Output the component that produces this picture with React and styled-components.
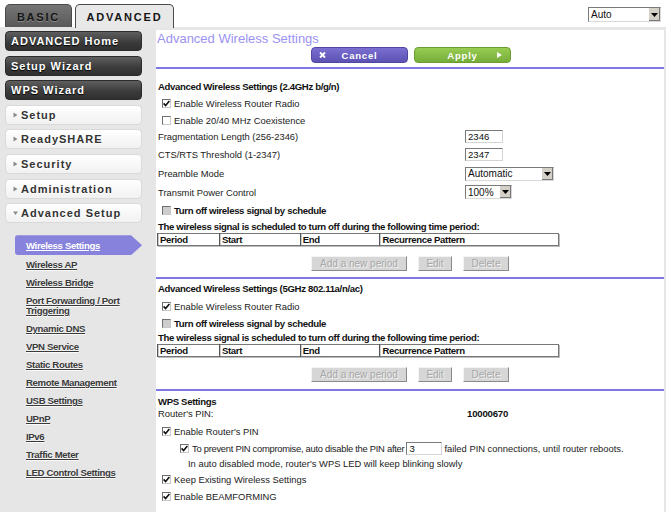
import React from 'react';
import styled, { createGlobalStyle } from 'styled-components';

const Global = createGlobalStyle`
  html, body { margin: 0; padding: 0; background: #fff; }
  body { font-family: "Liberation Sans", Arial, sans-serif; }
  * { box-sizing: border-box; }
`;

const Page = styled.div`
  width: 666px;
  height: 512px;
  overflow: hidden;
  display: flex;
  flex-direction: column;
  background: #e6e6e6;
`;

const TopBar = styled.div`
  height: 27px;
  flex: none;
  background: #fff;
  display: flex;
  align-items: flex-end;
  padding: 0 5px;
`;

const Tab = styled.div`
  height: ${p => (p.$active ? 24 : 23)}px;
  width: ${p => p.$w}px;
  margin-right: 3px;
  border: 1px solid #4a4a4a;
  border-bottom: none;
  border-radius: 5px 5px 0 0;
  background: ${p => (p.$active ? '#e8e8e8' : 'linear-gradient(#767676, #585858)')};
  color: #151515;
  text-shadow: ${p => (p.$active ? 'none' : '0 1px 0 #8a8a8a')};
  font-weight: bold;
  font-size: 11px;
  letter-spacing: 1.8px;
  display: flex;
  align-items: center;
  justify-content: center;
  padding-top: 1px;
  margin-bottom: ${p => (p.$active ? -1 : 0)}px;
  position: relative;
`;

const TopSpacer = styled.div`
  flex: 1;
`;

const FakeSelect = styled.div`
  width: ${p => p.$w}px;
  height: ${p => p.$h || 13}px;
  border: 1px solid;
  border-color: #7a7a7a #d8d8d8 #d8d8d8 #7a7a7a;
  background: #fff;
  display: flex;
  align-items: center;
  font-size: ${p => p.$fs || 10}px;
  color: #111;
  padding-left: 2px;
  align-self: ${p => (p.$top ? 'flex-start' : 'auto')};
  margin-top: ${p => (p.$top ? 7 : 0)}px;
`;

const SelectText = styled.span`
  flex: 1;
  white-space: nowrap;
`;

const SelectArrow = styled.span`
  width: 12px;
  height: 100%;
  background: #d4d0c8;
  border-left: 1px solid #fff;
  box-shadow: inset -1px -1px 0 #777;
  display: flex;
  align-items: center;
  justify-content: center;
`;

const Main = styled.div`
  flex: 1;
  display: flex;
  min-height: 0;
`;

const Sidebar = styled.nav`
  width: 156px;
  flex: none;
  padding: 4px 0 0 5px;
  display: flex;
  flex-direction: column;
`;

const MenuStack = styled.div`
  display: flex;
  flex-direction: column;
  gap: 4.6px;
  width: 137px;
`;

const MenuButton = styled.div`
  height: 20px;
  border-radius: 4px;
  display: flex;
  align-items: center;
  font-weight: bold;
  font-size: 11px;
  letter-spacing: 1px;
  white-space: nowrap;
  padding-left: ${p => (p.$dark ? 5 : 7)}px;
  gap: 3px;
  ${p =>
    p.$dark
      ? `
    background: linear-gradient(#5e5e5e, #3a3a3a 60%, #303030);
    border: 1px solid #2c2c2c;
    color: #fff;
    text-shadow: 0 1px 1px #000;
  `
      : `
    background: linear-gradient(#ffffff, #f1f1f1);
    border: 1px solid #dadada;
    color: #333;
    text-shadow: 0 1px 0 #fff;
  `}
`;

const SubList = styled.div`
  margin-top: 12px;
  display: flex;
  flex-direction: column;
  gap: 8px;
`;

const ActiveLink = styled.div`
  width: 127px;
  height: 20px;
  margin-left: 10px;
  margin-bottom: -3px;
  padding-left: 11px;
  display: flex;
  align-items: center;
  background: #8782dc;
  border-radius: 3px 0 0 3px;
  clip-path: polygon(0 0, 116px 0, 127px 50%, 116px 100%, 0 100%);
  color: #fff;
  font-weight: bold;
  font-size: 9.6px;
  letter-spacing: -0.35px;
  text-decoration: underline;
`;

const SubLink = styled.a`
  display: block;
  margin-left: 21px;
  width: 100px;
  line-height: 10px;
  font-weight: bold;
  font-size: 9.6px;
  letter-spacing: -0.35px;
  color: #3a3a3a;
  text-decoration: underline;
  text-shadow: 0 1px 0 #fafafa;
`;

const Content = styled.main`
  flex: 1;
  margin: 3px 2px 0 0;
  background: #fff;
  display: flex;
  flex-direction: column;
  font-size: 9.4px;
  color: #222;
`;

const Title = styled.div`
  height: 17px;
  line-height: 17px;
  padding-left: 1px;
  font-size: 13px;
  color: #9c92f2;
`;

const ActionBar = styled.div`
  display: flex;
  gap: 6px;
  margin-left: 155px;
`;

const ActionButton = styled.div`
  width: 97px;
  height: 16px;
  border-radius: 4px;
  display: flex;
  align-items: center;
  justify-content: center;
  position: relative;
  color: #fff;
  font-weight: bold;
  font-size: 9.5px;
  letter-spacing: 0.8px;
  background: ${p =>
    p.$green ? 'linear-gradient(#98cc52, #76ad3a)' : 'linear-gradient(#7b70d2, #5c52b2)'};
  border: 1px solid ${p => (p.$green ? '#6a9e33' : '#5047a3')};
`;

const ButtonIcon = styled.span`
  position: absolute;
  top: 50%;
  transform: translateY(-50%);
  ${p => (p.$right ? 'right: 8px;' : 'left: 7px;')}
  display: flex;
`;

const Divider = styled.div`
  height: 2px;
  flex: none;
  margin-top: ${p => p.$mt}px;
  background: #7e77e4;
`;

const Heading = styled.div`
  height: ${p => p.$h}px;
  margin-top: ${p => p.$mt || 0}px;
  padding-left: 2px;
  display: flex;
  align-items: center;
  font-weight: bold;
  font-size: 9.6px;
  letter-spacing: -0.35px;
  color: #111;
`;

const Row = styled.div`
  height: ${p => p.$h}px;
  margin-top: ${p => p.$mt || 0}px;
  padding-left: ${p => p.$indent ?? 6}px;
  display: flex;
  align-items: center;
  white-space: nowrap;
`;

const FieldRow = styled.div`
  height: ${p => p.$h}px;
  display: grid;
  grid-template-columns: 307px auto;
  align-items: center;
  padding-left: 2px;
  white-space: nowrap;
`;

const Value = styled.span`
  padding-left: 2px;
  font-weight: bold;
  font-size: 9.6px;
  letter-spacing: -0.2px;
  color: #111;
`;

const Box = styled.span`
  width: 9px;
  height: 9px;
  flex: none;
  margin-right: 3px;
  border: 1px solid;
  border-color: #6f6f6f #c8c8c8 #c8c8c8 #6f6f6f;
  background: ${p => (p.$disabled ? '#cdcdcd' : '#fff')};
  display: flex;
  align-items: center;
  justify-content: center;
`;

const Bold = styled.span`
  font-weight: bold;
  font-size: 9.6px;
  letter-spacing: -0.35px;
  color: #111;
`;

const Tight = styled.span`
  letter-spacing: -0.27px;
`;

const TextInput = styled.div`
  width: ${p => p.$w || 38}px;
  height: 13px;
  margin: ${p => p.$m || 0};
  border: 1px solid;
  border-color: #7a7a7a #d4d4d4 #d4d4d4 #7a7a7a;
  background: #fff;
  padding-left: 2px;
  display: flex;
  align-items: center;
  font-size: 9.6px;
  color: #111;
`;

const Sched = styled.table`
  margin: 1px 0 0 1px;
  width: 402px;
  height: 13px;
  border-collapse: collapse;
  border: 1px solid #777;
  box-shadow: 1px 1px 0 #bbb;
  td {
    padding: 0 0 0 2px;
    height: 11px;
    border-left: 1px solid #555;
    box-shadow: inset 1px 0 0 #ccc;
    font-weight: bold;
    font-size: 9.6px;
    letter-spacing: -0.35px;
    color: #111;
    line-height: 11px;
  }
`;

const Cell = styled.td`
  width: ${p => p.$w}px;
`;

const ButtonRow = styled.div`
  display: flex;
  gap: 11px;
  margin: 10px 0 0 155px;
`;

const GreyButton = styled.div`
  width: ${p => p.$w}px;
  height: 15px;
  background: #d6d6d6;
  border: 1px solid;
  border-color: #f4f4f4 #8a8a8a #8a8a8a #f4f4f4;
  color: #a6a6a6;
  text-shadow: 1px 1px 0 #f2f2f2;
  font-size: 10px;
  display: flex;
  align-items: center;
  justify-content: center;
`;

const Para = styled.span`
  display: inline-flex;
  align-items: center;
`;

const Check = ({ on, disabled }) => (
  <Box $disabled={disabled}>
    {on && (
      <svg width="7" height="7" viewBox="0 0 7 7">
        <path d="M0.6 3.4 L2.6 5.5 L6.4 1" fill="none" stroke="#111" strokeWidth="1.6" />
      </svg>
    )}
  </Box>
);

const Caret = ({ down, color = '#8a8a8a' }) => (
  <svg width="5" height="6" viewBox="0 0 5 6">
    {down ? (
      <polygon points="0,1.5 5,1.5 2.5,5" fill={color} />
    ) : (
      <polygon points="0.5,0.5 4.5,3 0.5,5.5" fill={color} />
    )}
  </svg>
);

const DropArrow = () => (
  <svg width="7" height="4" viewBox="0 0 7 4">
    <polygon points="0,0 7,0 3.5,4" fill="#000" />
  </svg>
);

const Select = ({ w, h, fs, top, children }) => (
  <FakeSelect $w={w} $h={h} $fs={fs} $top={top}>
    <SelectText>{children}</SelectText>
    <SelectArrow>
      <DropArrow />
    </SelectArrow>
  </FakeSelect>
);

const Schedule = () => (
  <>
    <Sched>
      <tbody>
        <tr>
          <Cell $w={62}>Period</Cell>
          <Cell $w={81}>Start</Cell>
          <Cell $w={80}>End</Cell>
          <Cell $w={179}>Recurrence Pattern</Cell>
        </tr>
      </tbody>
    </Sched>
    <ButtonRow>
      <GreyButton $w={96}>Add a new period</GreyButton>
      <GreyButton $w={34}>Edit</GreyButton>
      <GreyButton $w={46}>Delete</GreyButton>
    </ButtonRow>
  </>
);

const links = [
  'Wireless AP',
  'Wireless Bridge',
  'Port Forwarding / Port Triggering',
  'Dynamic DNS',
  'VPN Service',
  'Static Routes',
  'Remote Management',
  'USB Settings',
  'UPnP',
  'IPv6',
  'Traffic Meter',
  'LED Control Settings',
];

export default function App() {
  return (
    <Page>
      <Global />
      <TopBar>
        <Tab $w={67}>BASIC</Tab>
        <Tab $w={99} $active>ADVANCED</Tab>
        <TopSpacer />
        <Select w={73} h={15} fs={10} top>
          Auto
        </Select>
      </TopBar>
      <Main>
        <Sidebar>
          <MenuStack>
            <MenuButton $dark>ADVANCED Home</MenuButton>
            <MenuButton $dark>Setup Wizard</MenuButton>
            <MenuButton $dark>WPS Wizard</MenuButton>
            <MenuButton><Caret />Setup</MenuButton>
            <MenuButton><Caret />ReadySHARE</MenuButton>
            <MenuButton><Caret />Security</MenuButton>
            <MenuButton><Caret />Administration</MenuButton>
            <MenuButton><Caret down />Advanced Setup</MenuButton>
          </MenuStack>
          <SubList>
            <ActiveLink>Wireless Settings</ActiveLink>
            {links.map(l => (
              <SubLink key={l}>{l}</SubLink>
            ))}
          </SubList>
        </Sidebar>
        <Content>
          <Title>Advanced Wireless Settings</Title>
          <ActionBar>
            <ActionButton>
              <ButtonIcon>
                <svg width="7" height="7" viewBox="0 0 7 7">
                  <path d="M1 1 L6 6 M6 1 L1 6" stroke="#fff" strokeWidth="1.8" />
                </svg>
              </ButtonIcon>
              Cancel
            </ActionButton>
            <ActionButton $green>
              Apply
              <ButtonIcon $right>
                <svg width="5" height="6" viewBox="0 0 5 6">
                  <polygon points="0,0 5,3 0,6" fill="#fff" />
                </svg>
              </ButtonIcon>
            </ActionButton>
          </ActionBar>
          <Divider $mt={4} />

          <Heading $h={18} $mt={8}>Advanced Wireless Settings (2.4GHz b/g/n)</Heading>
          <Row $h={17}><Check on />Enable Wireless Router Radio</Row>
          <Row $h={16}><Check />Enable 20/40 MHz Coexistence</Row>
          <FieldRow $h={17}>
            <span>Fragmentation Length (256-2346)</span>
            <TextInput>2346</TextInput>
          </FieldRow>
          <FieldRow $h={19}>
            <span>CTS/RTS Threshold (1-2347)</span>
            <TextInput>2347</TextInput>
          </FieldRow>
          <FieldRow $h={19}>
            <span>Preamble Mode</span>
            <Select w={89} h={14}>Automatic</Select>
          </FieldRow>
          <FieldRow $h={18}>
            <span>Transmit Power Control</span>
            <Select w={47} h={14}>100%</Select>
          </FieldRow>
          <Row $h={19}><Check disabled /><Bold>Turn off wireless signal by schedule</Bold></Row>
          <Heading $h={12}>The wireless signal is scheduled to turn off during the following time period:</Heading>
          <Schedule />
          <Divider $mt={6} />

          <Heading $h={18}>Advanced Wireless Settings (5GHz 802.11a/n/ac)</Heading>
          <Row $h={18}><Check on />Enable Wireless Router Radio</Row>
          <Row $h={16}><Check disabled /><Bold>Turn off wireless signal by schedule</Bold></Row>
          <Heading $h={12}>The wireless signal is scheduled to turn off during the following time period:</Heading>
          <Schedule />
          <Divider $mt={7} />

          <Heading $h={12} $mt={4}>WPS Settings</Heading>
          <FieldRow $h={12}>
            <span>Router's PIN:</span>
            <Value>10000670</Value>
          </FieldRow>
          <Row $h={18} $mt={3}><Check on />Enable Router's PIN</Row>
          <Row $h={16} $indent={24}>
            <Check on />
            <Para>
              <Tight>To prevent PIN compromise, auto disable the PIN after</Tight>
              <TextInput $w={36} $m="0 2px 0 2px">3</TextInput>
              failed PIN connections, until router reboots.
            </Para>
          </Row>
          <Row $h={14} $indent={32}>In auto disabled mode, router's WPS LED will keep blinking slowly</Row>
          <Row $h={18}><Check on />Keep Existing Wireless Settings</Row>
          <Row $h={16}><Check on />Enable BEAMFORMING</Row>
        </Content>
      </Main>
    </Page>
  );
}
